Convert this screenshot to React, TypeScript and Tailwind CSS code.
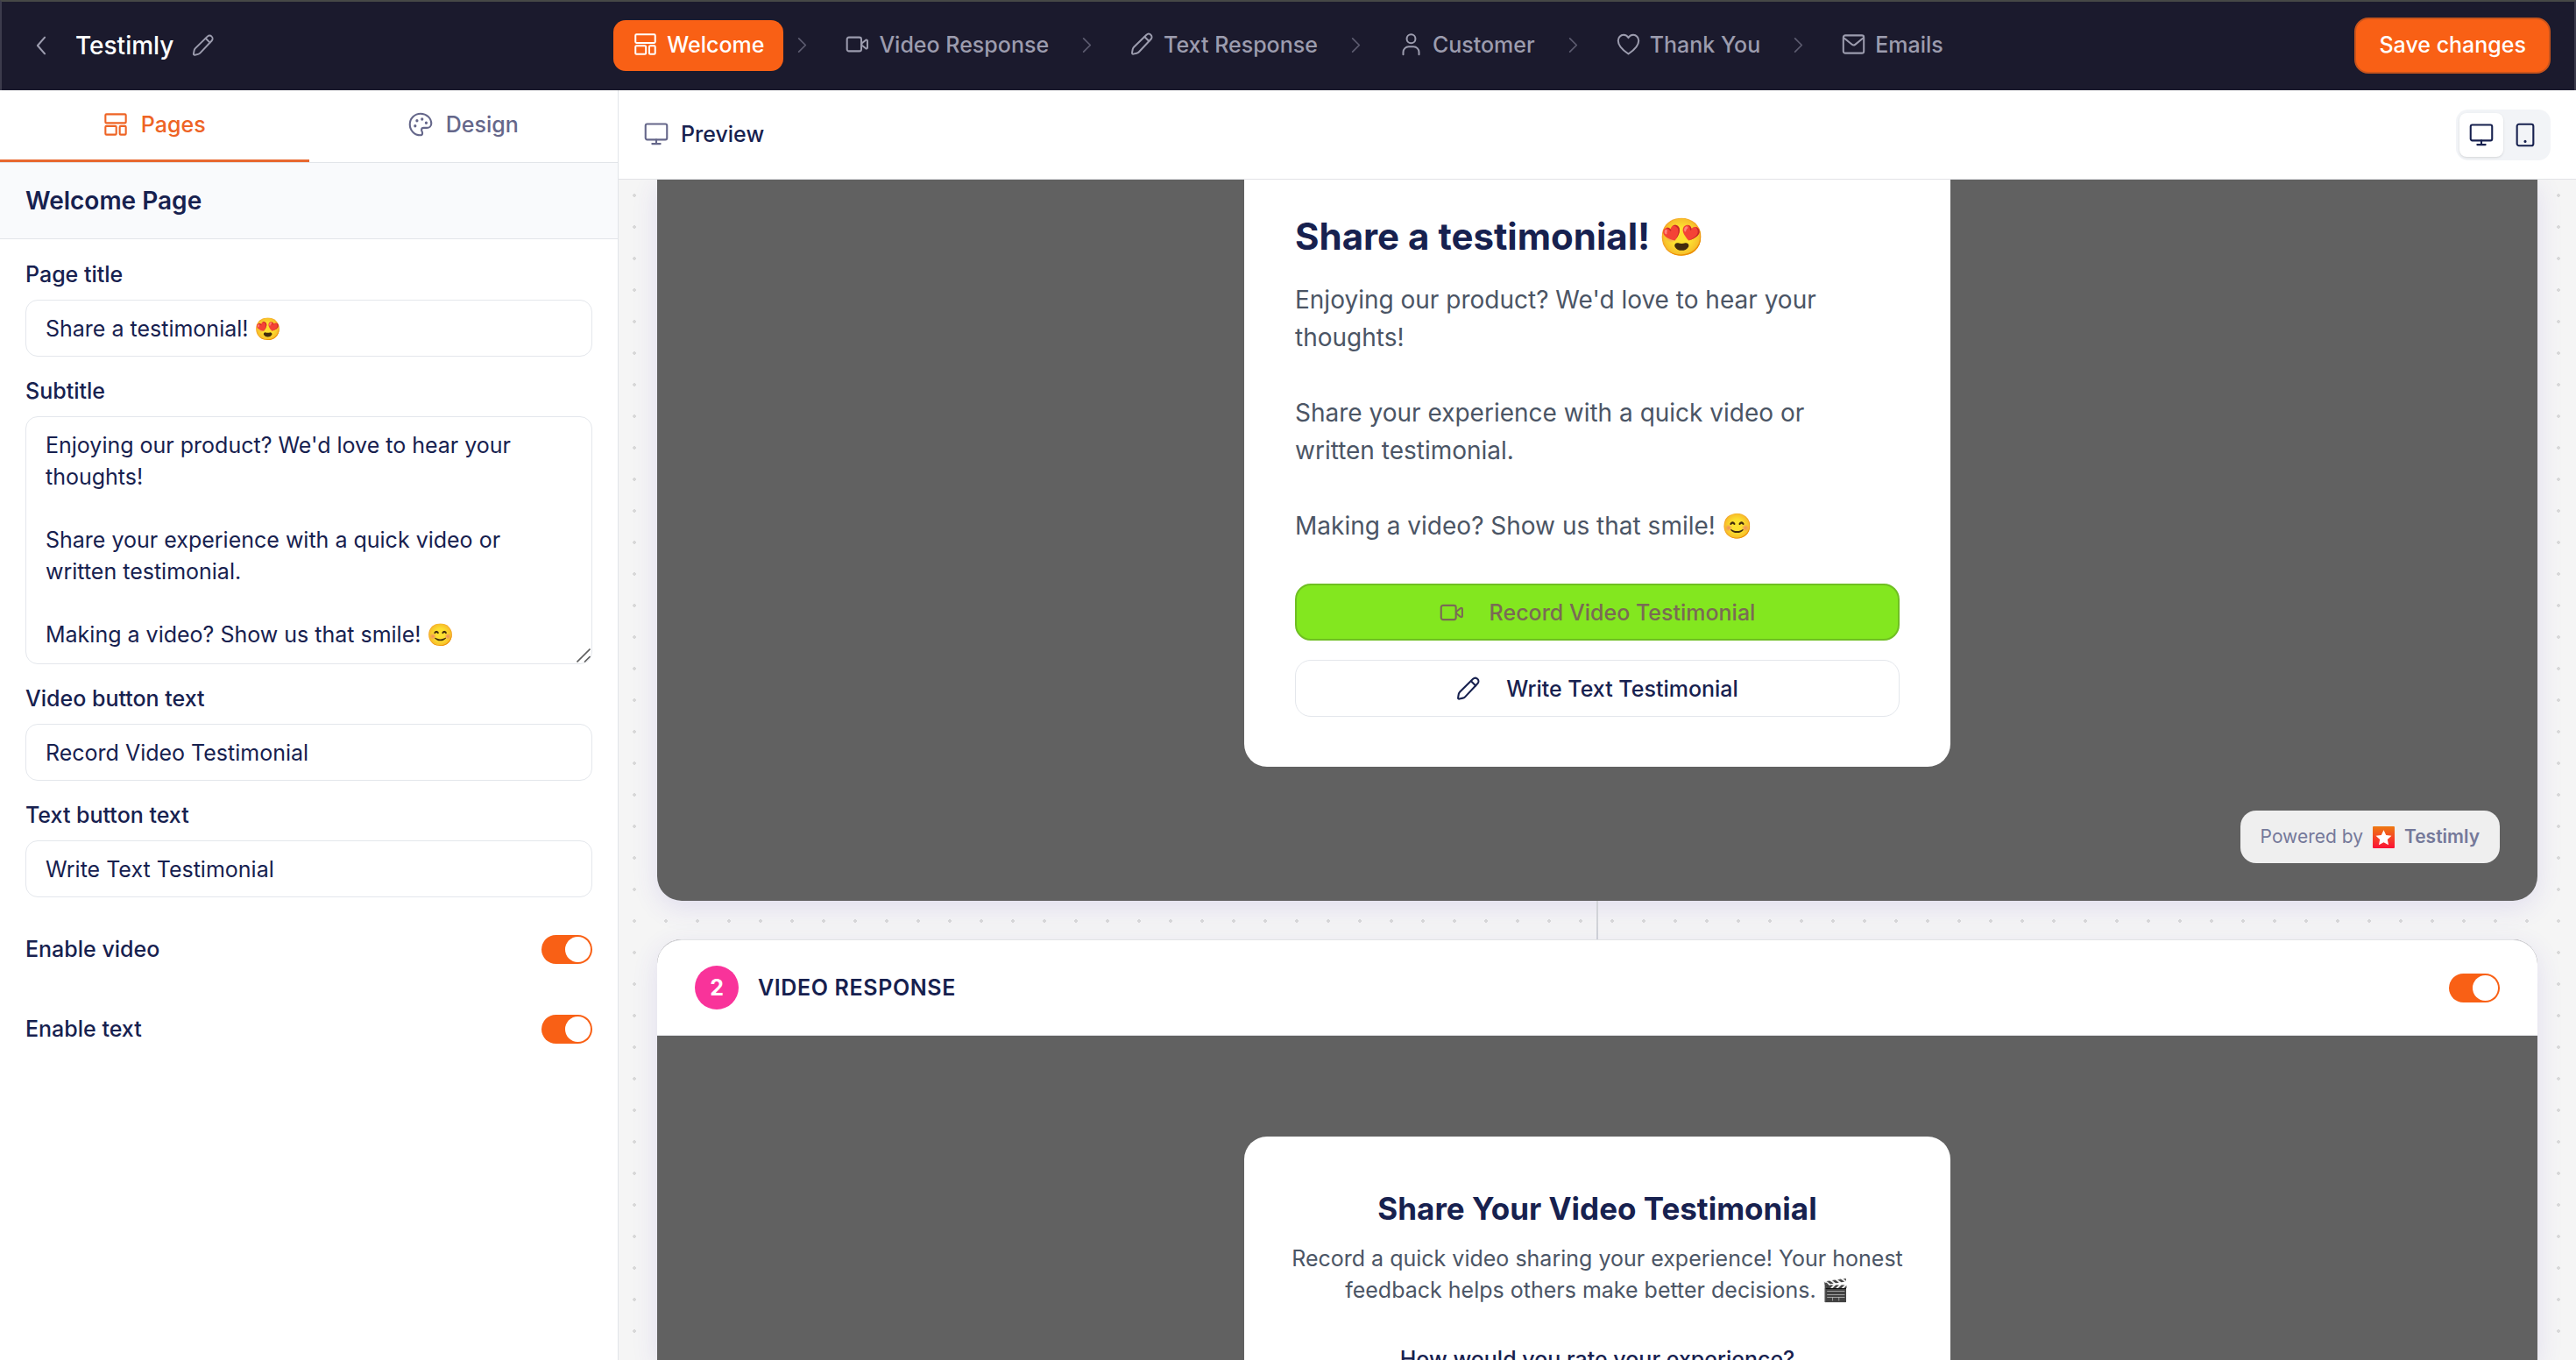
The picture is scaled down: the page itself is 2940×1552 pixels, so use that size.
import { useState } from 'react'
import type { ReactNode } from 'react'

function Icon({ children, className = 'size-7' }: { children: ReactNode; className?: string }) {
  return (
    <svg viewBox="0 0 24 24" fill="none" stroke="currentColor" strokeWidth={1.8} strokeLinecap="round" strokeLinejoin="round"
      className={`shrink-0 ${className}`} aria-hidden="true">
      {children}
    </svg>
  )
}

const icons = {
  layout: (
    <>
      <rect x="2" y="2" width="20" height="8.6" rx="1" />
      <rect x="2" y="13.6" width="10.6" height="8.4" rx="1" />
      <rect x="16" y="13.6" width="6" height="8.4" rx="1" />
    </>
  ),
  video: (
    <>
      <rect x="1.5" y="5" width="14.5" height="14" rx="2" />
      <path d="M16.4 11.1 20.6 7.7c.7-.5 1.6 0 1.6.8v7c0 .8-.9 1.3-1.6.8l-4.2-3.4Z" />
    </>
  ),
  pencil: (
    <>
      <path d="m1.8 20.6.6-3.4c.2-.9.6-1.7 1.2-2.3L16.4 2.4c1.3-1.2 3.2-1.2 4.4 0 1.3 1.2 1.3 3.2.1 4.5L8.8 19.8c-.6.7-1.4 1.1-2.3 1.3l-3.4.8c-.8.2-1.5-.5-1.3-1.3Z" />
      <path d="m14.5 4.4 4.5 4.5" />
    </>
  ),
  user: (
    <>
      <circle cx="12" cy="6.4" r="4.4" />
      <path d="M4 22.5V20a5.5 5.5 0 0 1 5.5-5.5h5A5.5 5.5 0 0 1 20 20v2.5" />
    </>
  ),
  heart: <path d="M12 21.8C9 19.8 1.6 14.6 1.6 8.4c0-3.4 2.5-5.9 5.5-5.9 2.1 0 3.9 1.1 4.9 2.9 1-1.8 2.8-2.9 4.9-2.9 3 0 5.5 2.5 5.5 5.9 0 6.2-7.4 11.4-10.4 13.4Z" />,
  mail: (
    <>
      <rect x="1.6" y="3" width="20.8" height="18" rx="2" />
      <path d="m2.4 5.8 8 6.5c1 .8 2.200.8 3.200 0l8-6.500" />
    </>
  ),
  palette: (
    <>
      <path d="M12 1.5C6.2 1.5 1.5 6.2 1.5 12s4.5 10.5 10.2 10.5c1.3 0 2.1-.9 2.1-2 0-1.3-.9-1.9-.9-3.2 0-1.2 1-2 2.2-2h3.1c2.4 0 4.3-1.8 4.3-4 0-5.6-4.7-9.8-10.5-9.8Z" />
      <path d="M6.7 13.5v.1M8.5 8.3v.1M13.5 6.8v.1M17.5 10.5v.1" strokeWidth="2.8" />
    </>
  ),
  monitor: (
    <>
      <rect x="1.5" y="2.2" width="21" height="15.3" rx="1.6" />
      <path d="M12 17.5v4M8 21.5h8" />
    </>
  ),
  tablet: (
    <>
      <rect x="4" y="1.5" width="16" height="21" rx="2" />
      <path d="M12 18.3v.1" strokeWidth="2.6" />
    </>
  ),
  next: <path d="m8 4 8 8-8 8" />,
  back: <path d="m15.5 4-7 8 7 8" />,
}

const steps: { label: string; icon: ReactNode }[] = [
  { label: 'Welcome', icon: icons.layout },
  { label: 'Video Response', icon: icons.video },
  { label: 'Text Response', icon: icons.pencil },
  { label: 'Customer', icon: icons.user },
  { label: 'Thank You', icon: icons.heart },
  { label: 'Emails', icon: icons.mail },
]

function Toggle({ id, label, checked, onChange }: { id: string; label?: string; checked: boolean; onChange: (v: boolean) => void }) {
  return (
    <input id={id} type="checkbox" role="switch" aria-label={label} checked={checked} onChange={(e) => onChange(e.target.checked)}
      className="h-[33px] w-[58px] shrink-0 cursor-pointer appearance-none rounded-full bg-gray-300 p-[2px] before:block before:size-[29px] before:rounded-full before:bg-white before:content-[''] checked:bg-[#f96015] checked:before:ml-[25px]" />
  )
}

function Field({ id, label, value, onChange }: { id: string; label: string; value: string; onChange: (v: string) => void }) {
  return (
    <div>
      <label htmlFor={id} className="mb-[11px] block font-medium">{label}</label>
      <input id={id} value={value} onChange={(e) => onChange(e.target.value)}
        className="block h-[65px] w-full rounded-[14px] border border-[#e4e7ec] px-[22px] focus:outline-none" />
    </div>
  )
}

export default function App() {
  const [step, setStep] = useState('Welcome')
  const [device, setDevice] = useState('desktop')
  const [title, setTitle] = useState('Share a testimonial! 😍')
  const [subtitle, setSubtitle] = useState(
    "Enjoying our product? We'd love to hear your thoughts!\n\nShare your experience with a quick video or written testimonial.\n\nMaking a video? Show us that smile! 😊",
  )
  const [videoText, setVideoText] = useState('Record Video Testimonial')
  const [textText, setTextText] = useState('Write Text Testimonial')
  const [video, setVideo] = useState(true)
  const [text, setText] = useState(true)
  const [videoPage, setVideoPage] = useState(true)

  return (
    <div className="flex h-screen flex-col overflow-hidden bg-white font-['Inter','Noto_Color_Emoji',sans-serif] text-[25px] leading-[36px] text-[#17214f]">
      <header className="grid h-[103px] shrink-0 grid-cols-[1fr_auto_1fr] items-center border-x-2 border-t-2 border-x-[#3c3b4c] border-t-[#464846] bg-[#1b1a2d] px-[27px] pb-[2px] text-[#9c9cae]">
        <div className="flex items-center">
          <button aria-label="Back" className="flex size-9 items-center justify-center"><Icon>{icons.back}</Icon></button>
          <h1 className="ml-[21px] text-[28px] font-medium text-white">Testimly</h1>
          <button aria-label="Rename" className="ml-[21px]"><Icon className="size-[26px]">{icons.pencil}</Icon></button>
        </div>
        <nav className="flex items-center">
          {steps.map((s, i) => (
            <div key={s.label} className="flex items-center">
              {i > 0 && <Icon className="mr-[15px] ml-[10px] size-[23px] text-[#5c5b6f]">{icons.next}</Icon>}
              <button onClick={() => setStep(s.label)}
                className={`flex h-[58px] items-center gap-[11px] rounded-[14px] pr-[22px] pb-[2px] pl-[23px] font-medium ${step === s.label ? 'bg-[#f96015] text-white' : ''}`}>
                <Icon className="size-[27px]">{s.icon}</Icon>
                {s.label}
              </button>
            </div>
          ))}
        </nav>
        <button className="h-16 justify-self-end rounded-[16px] border-2 border-[#c9541c] bg-[#f96015] px-[26px] pb-[2px] font-medium text-white">Save changes</button>
      </header>

      <div className="flex min-h-0 flex-1">
        <aside className="w-[706px] shrink-0 border-r border-[#e2e5e9]">
          <div className="flex h-[83px] border-b border-[#e2e5e9] text-[#65678a]">
            <button className="flex flex-1 items-center justify-center gap-[15px] border-b-[3px] border-[#e8682f] pb-[2px] font-medium text-[#ee6425]">
              <Icon>{icons.layout}</Icon>Pages
            </button>
            <button className="flex flex-1 items-center justify-center gap-[15px] border-b-[3px] border-transparent pb-[2px] font-medium">
              <Icon>{icons.palette}</Icon>Design
            </button>
          </div>
          <div className="border-b border-[#e2e5e9] bg-[#f9fafc] px-[29px] py-[25px]">
            <h2 className="text-[28px] font-semibold">Welcome Page</h2>
          </div>
          <div className="flex flex-col gap-[21px] px-[29px] py-[22px]">
            <Field id="page-title" label="Page title" value={title} onChange={setTitle} />
            <div>
              <label htmlFor="subtitle" className="mb-[11px] block font-medium">Subtitle</label>
              <div className="relative">
                <textarea id="subtitle" rows={7} value={subtitle} onChange={(e) => setSubtitle(e.target.value)}
                  className="block h-[283px] w-full resize-none overflow-hidden rounded-[14px] border border-[#e4e7ec] px-[22px] py-[14px] focus:outline-none" />
                <svg viewBox="0 0 16 16" className="pointer-events-none absolute right-[2px] bottom-[2px] size-4" stroke="#5f5f5f" strokeWidth="1.6" aria-hidden="true">
                  <path d="M.5 15.5 15.5.5M9 15.5 15.5 9" />
                </svg>
              </div>
            </div>
            <Field id="video-text" label="Video button text" value={videoText} onChange={setVideoText} />
            <Field id="text-text" label="Text button text" value={textText} onChange={setTextText} />
            <div className="mt-5 flex flex-col gap-[55px]">
              <div className="flex items-center justify-between">
                <label htmlFor="enable-video" className="font-medium">Enable video</label>
                <Toggle id="enable-video" checked={video} onChange={setVideo} />
              </div>
              <div className="flex items-center justify-between">
                <label htmlFor="enable-text" className="font-medium">Enable text</label>
                <Toggle id="enable-text" checked={text} onChange={setText} />
              </div>
            </div>
          </div>
        </aside>

        <main className="flex min-w-0 flex-1 flex-col">
          <div className="flex h-[102px] shrink-0 items-center justify-between border-b border-[#e2e3e6] px-[29px]">
            <div className="flex items-center gap-[14px] pb-[2px]">
              <Icon className="size-7 text-[#65678a]">{icons.monitor}</Icon>
              <h2 className="font-medium">Preview</h2>
            </div>
            <div className="flex rounded-[14px] bg-[#f2f4f7] p-1">
              <button aria-label="Desktop" onClick={() => setDevice('desktop')}
                className={`flex size-[50px] items-center justify-center rounded-[8px] ${device === 'desktop' ? 'bg-white shadow-sm' : ''}`}>
                <Icon>{icons.monitor}</Icon>
              </button>
              <button aria-label="Mobile" onClick={() => setDevice('mobile')}
                className={`flex size-[50px] items-center justify-center rounded-[8px] ${device === 'mobile' ? 'bg-white shadow-sm' : ''}`}>
                <Icon>{icons.tablet}</Icon>
              </button>
            </div>
          </div>

          <div className="flex min-h-0 flex-1 flex-col overflow-hidden bg-[#f5f5f5] bg-[radial-gradient(circle,#d9d9d9_2px,transparent_2px)] bg-[size:36px_36px] px-11">
            <section className="shrink-0 rounded-b-[28px] bg-[#616161] pb-[43px] shadow-[0_8px_30px_rgba(80,60,200,0.12)]">
              <div className="mx-auto w-[806px] rounded-b-[26px] bg-white px-[58px] pt-[36px] pb-[57px]">
                <h3 className="text-[42px] leading-[58px] font-bold">{title}</h3>
                <p className="mt-[22px] mb-[44px] pr-7 text-[28px] leading-[43px] whitespace-pre-line text-[#4b5565]">{subtitle}</p>
                <button className="flex h-[65px] w-full items-center justify-center gap-[29px] rounded-[18px] border-2 border-[#6fbf22] bg-[#83e71f] font-medium text-[#7a6a55]">
                  <Icon>{icons.video}</Icon>{videoText}
                </button>
                <button className="mt-[22px] flex h-[65px] w-full items-center justify-center gap-[29px] rounded-[18px] border border-[#e4e7ec] font-medium">
                  <Icon>{icons.pencil}</Icon>{textText}
                </button>
              </div>
              <div className="mt-[50px] flex justify-end px-[43px]">
                <a href="#testimly" className="flex h-[60px] items-center rounded-[18px] bg-[#efefef] px-[23px] text-[21px] text-[#75799a]">
                  Powered by
                  <svg viewBox="0 0 24 24" className="mx-[11px] size-[25px]" aria-hidden="true">
                    <defs>
                      <linearGradient id="logo" x1="0" y1="0" x2="0" y2="1">
                        <stop offset="0" stopColor="#ee7a12" />
                        <stop offset="1" stopColor="#fb1236" />
                      </linearGradient>
                    </defs>
                    <rect width="24" height="24" rx="1" fill="url(#logo)" />
                    <path d="m12 4 2.6 5.500 6 .8-4.400 4.100 1.100 6L12 17.500l-5.300 2.900 1.100-6-4.400-4.100 6-.8Z" fill="#fff" />
                  </svg>
                  <span className="font-semibold">Testimly</span>
                </a>
              </div>
            </section>

            <div className="mx-auto h-11 w-[2px] shrink-0 bg-[#d1d3d8]" />

            <section className="min-h-0 flex-1 rounded-t-[28px] bg-[#616161] shadow-[0_8px_30px_rgba(80,60,200,0.12)]">
              <div className="flex h-[110px] items-center justify-between rounded-t-[28px] border-t border-b border-[#e2e3e6] bg-white px-[43px]">
                <div className="flex items-center gap-[22px]">
                  <span className="flex size-[50px] items-center justify-center rounded-full bg-[#f9339a] font-bold text-white">2</span>
                  <h2 className="font-semibold tracking-wide uppercase">Video Response</h2>
                </div>
                <Toggle id="video-page" label="Video Response" checked={videoPage} onChange={setVideoPage} />
              </div>
              <div className="px-11 pt-[115px]">
                <div className="mx-auto w-[806px] rounded-t-[26px] bg-white px-[46px] pt-[57px] pb-[400px] text-center">
                  <h3 className="text-[35px] leading-[50px] font-bold">Share Your Video Testimonial</h3>
                  <p className="mt-[14px] text-[#4b5565]">
                    Record a quick video sharing your experience! Your honest feedback helps others make better decisions. 🎬
                  </p>
                  <p className="mt-[43px] font-medium">How would you rate your experience?</p>
                </div>
              </div>
            </section>
          </div>
        </main>
      </div>
    </div>
  )
}
